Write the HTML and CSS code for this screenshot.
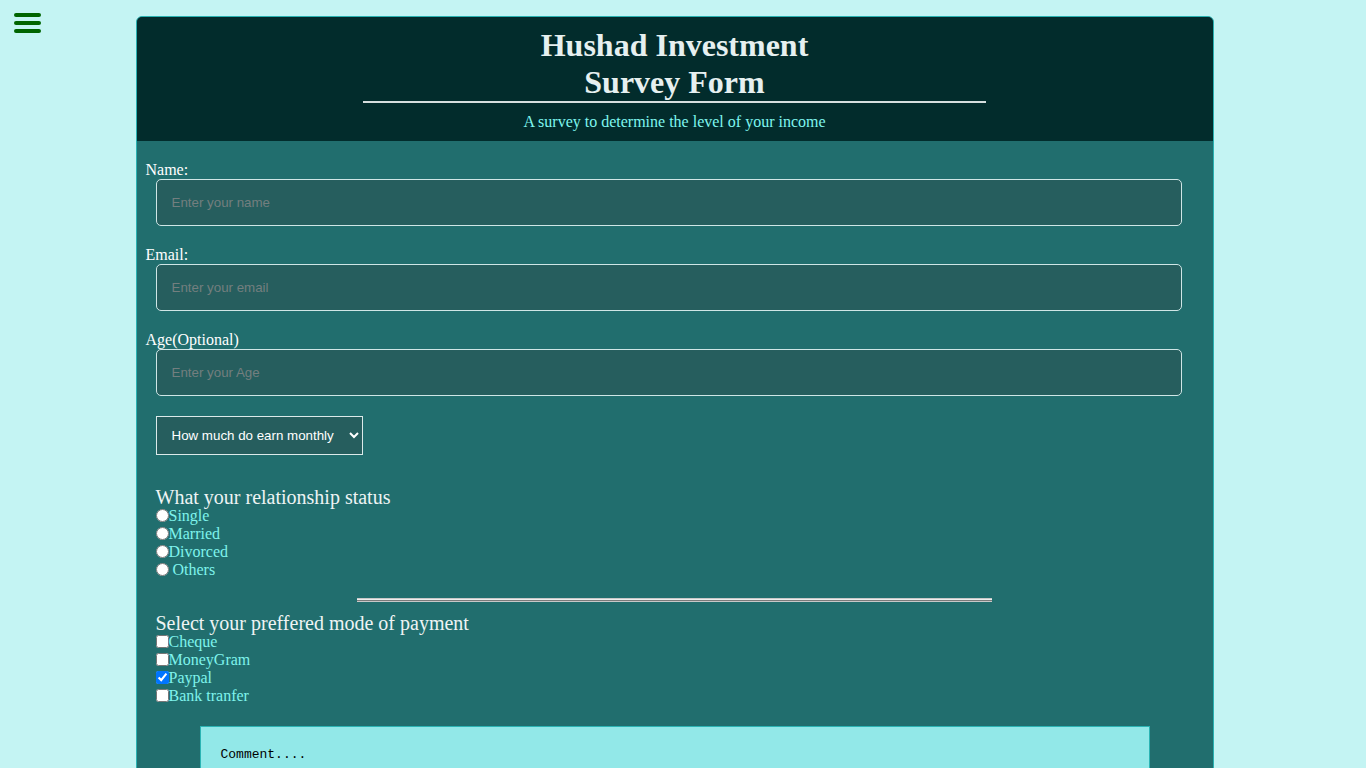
FILE: index.html
```html
<!DOCTYPE html>
<html lang="en">
<head>
<meta charset="utf-8">
<title>Hushad Investment Survey Form</title>
<link rel="stylesheet" href="styles.css">
</head>
<body>
<div class="menu-btn">
  <svg width="27" height="22" viewBox="0 0 27 22"><g stroke="#006400" stroke-width="4" stroke-linecap="round"><line x1="2" y1="3" x2="25" y2="3"/><line x1="2" y1="11" x2="25" y2="11"/><line x1="2" y1="19" x2="25" y2="19"/></g></svg>
</div>
<main class="card">
  <header class="card-head">
    <h1 class="title">Hushad Investment<br>Survey Form</h1>
    <p class="subtitle">A survey to determine the level of your income</p>
  </header>
  <form class="form">
    <label class="field-label" for="name">Name:</label>
    <input class="text-input" id="name" type="text" placeholder="Enter your name">
    <label class="field-label" for="email">Email:</label>
    <input class="text-input" id="email" type="email" placeholder="Enter your email">
    <label class="field-label" for="age">Age(Optional)</label>
    <input class="text-input" id="age" type="number" placeholder="Enter your Age">
    <select class="dropdown">
      <option>How much do earn monthly</option>
      <option>Below $500</option>
      <option>$500 - $2000</option>
      <option>Above $2000</option>
    </select>
    <div class="group">
      <div class="group-title">What your relationship status</div>
      <div class="opt"><input type="radio" name="rel" id="r1"><label for="r1">Single</label></div>
      <div class="opt"><input type="radio" name="rel" id="r2"><label for="r2">Married</label></div>
      <div class="opt"><input type="radio" name="rel" id="r3"><label for="r3">Divorced</label></div>
      <div class="opt"><input type="radio" name="rel" id="r4"><label for="r4">&nbsp;Others</label></div>
    </div>
    <hr class="divider">
    <div class="group group-pay">
      <div class="group-title">Select your preffered mode of payment</div>
      <div class="opt"><input type="checkbox" id="c1"><label for="c1">Cheque</label></div>
      <div class="opt"><input type="checkbox" id="c2"><label for="c2">MoneyGram</label></div>
      <div class="opt"><input type="checkbox" id="c3" checked><label for="c3">Paypal</label></div>
      <div class="opt"><input type="checkbox" id="c4"><label for="c4">Bank tranfer</label></div>
    </div>
    <textarea class="comment" placeholder="Comment...."></textarea>
    <button class="submit" type="submit">Submit</button>
  </form>
</main>
</body>
</html>
```

FILE: styles.css
```css
html, body {
  margin: 0;
  padding: 0;
}
body {
  background: #c4f4f3;
  font-family: "Liberation Serif", "Times New Roman", serif;
  padding: 16px 17px 18px 0;
}
.menu-btn {
  position: fixed;
  top: 10px;
  left: 13px;
  width: 29px;
  height: 25px;
  display: flex;
  align-items: center;
  justify-content: center;
}
.card {
  width: 1078px;
  margin: 0 auto;
  box-sizing: border-box;
  border: 1px solid #2ab2b2;
  border-radius: 6px;
  overflow: hidden;
  background: #216e6e;
}
.card-head {
  background: #022c2c;
  padding: 10px 0 10px;
  text-align: center;
}
.title {
  margin: 0 auto;
  width: 623px;
  font-size: 32px;
  line-height: 37px;
  font-weight: bold;
  color: #e6f0f0;
  border-bottom: 2px solid #d6dede;
}
.subtitle {
  margin: 10px 0 0;
  font-size: 16px;
  line-height: 18px;
  color: #7ff6ef;
}
.form {
  display: flex;
  flex-direction: column;
  align-items: flex-start;
  padding: 20px 0 30px 19px;
}
.field-label {
  display: block;
  margin-left: -10px;
  font-size: 16px;
  line-height: 18px;
  color: #ffffff;
}
.text-input {
  box-sizing: border-box;
  width: 1026px;
  height: 47px;
  margin: 0 0 20px;
  padding: 0 15px;
  border: 1px solid #cfe6e6;
  border-radius: 5px;
  background: #265e5e;
  color: #ffffff;
  font-family: "Liberation Sans", Arial, sans-serif;
  font-size: 13.33px;
  outline: none;
}
.text-input::placeholder {
  color: #737f7f;
}
.dropdown {
  box-sizing: border-box;
  width: 207px;
  height: 39px;
  padding: 0 6px 0 11px;
  border: 1px solid #dbeaea;
  border-radius: 0;
  background: #265e5e;
  color: #ffffff;
  font-family: "Liberation Sans", Arial, sans-serif;
  font-size: 13.33px;
}
.group {
  margin-top: 32px;
}
.group-pay {
  margin-top: 11px;
}
.group-title {
  font-size: 20px;
  line-height: 20px;
  color: #eef4f4;
}
.opt {
  display: flex;
  align-items: center;
  height: 18px;
  font-size: 16px;
  line-height: 18px;
  color: #7ff3ec;
}
.opt input {
  margin: 0 0 2px;
  width: 13px;
  height: 13px;
}
.divider {
  align-self: center;
  margin: 19px 0 0 -19px;
  width: 635px;
  box-sizing: border-box;
  height: 4px;
  border: none;
  border-top: 1px solid #c8c8c8;
  border-bottom: 1px solid #c8c8c8;
  background: linear-gradient(#7a7a7a, #7a7a7a) center / 100% 1px no-repeat, #eeeeee;
}
.comment {
  align-self: center;
  margin: 21px 0 0 -19px;
  box-sizing: border-box;
  width: 950px;
  height: 160px;
  padding: 20px;
  border: 1px solid #2bb4b4;
  background: #92e8e8;
  font-family: "Liberation Mono", "DejaVu Sans Mono", monospace;
  font-size: 13px;
  color: #000000;
  resize: vertical;
}
.comment::placeholder {
  color: #000000;
}
.submit {
  align-self: center;
  margin: 20px 0 0 -19px;
  padding: 10px 30px;
  border: 1px solid #cfe6e6;
  border-radius: 5px;
  background: #022c2c;
  color: #e6f0f0;
  font-family: "Liberation Serif", serif;
  font-size: 16px;
}
```
